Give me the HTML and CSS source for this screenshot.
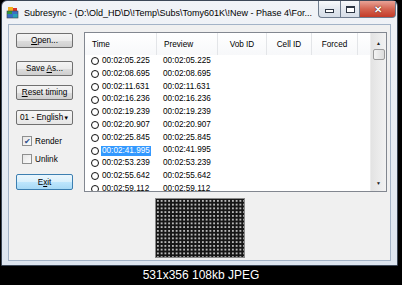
FILE: index.html
```html
<!DOCTYPE html>
<html lang="en">
<head>
  <meta charset="UTF-8" />
  <title>Subresync</title>
  <link rel="stylesheet" href="styles.css">
</head>
<body>

  <div class="window">
    <div class="titlebar">
      <svg class="title-icon" width="13" height="13" viewBox="0 0 13 13">
        <rect x="1" y="5" width="11" height="7" fill="#3a6fc4"/>
        <rect x="1" y="5" width="5" height="3" fill="#2f9a3e"/>
        <rect x="7" y="8" width="5" height="4" fill="#2aa0b8"/>
        <rect x="2" y="1" width="5" height="4" fill="#f2b01e"/>
        <rect x="7" y="2" width="4" height="3" fill="#d9322b"/>
        <rect x="1" y="5" width="11" height="7" fill="none" stroke="#444" stroke-width="0.6"/>
      </svg>
      <div class="title">Subresync - (D:\Old_HD\D\!Temp\Subs\Tomy601K\!New - Phase 4\For...</div>
      <div class="caption-buttons">
        <div class="cap-btn cap-min"><span></span></div>
        <div class="cap-btn cap-max"><span></span></div>
        <div class="cap-btn cap-close">&#x2715;</div>
      </div>
    </div>

    <div class="client">
      <div class="main">
        <div class="side">
          <button class="btn btn-open"><u>O</u>pen...</button>
          <button class="btn btn-save">Save <u>A</u>s...</button>
          <button class="btn btn-reset"><u>R</u>eset timing</button>
          <div class="combo">01 - English <span class="combo-arrow">&#9660;</span></div>
          <label class="check check-render"><span class="box checked">&#10004;</span>Render</label>
          <label class="check check-unlink"><span class="box"></span>Unlink</label>
          <button class="btn btn-exit">E<u>x</u>it</button>
        </div>

        <div class="list">
          <div class="list-body">
            <div class="list-head">
              <div class="hcell">Time</div>
              <div class="hcell">Preview</div>
              <div class="hcell center">Vob ID</div>
              <div class="hcell center">Cell ID</div>
              <div class="hcell center">Forced</div>
              <div class="hcell"></div>
            </div>
            <div class="list-rows" id="rows"></div>
          </div>
          <div class="scrollbar">
            <div class="sb-up">&#9650;</div>
            <div class="sb-thumb"></div>
            <div class="sb-track"></div>
            <div class="sb-down">&#9660;</div>
          </div>
        </div>
      </div>

      <div class="preview"></div>
    </div>
  </div>

  <div class="caption">531x356 108kb JPEG</div>

  <script>
    const times = [
      '00:02:05.225', '00:02:08.695', '00:02:11.631', '00:02:16.236',
      '00:02:19.239', '00:02:20.907', '00:02:25.845', '00:02:41.995',
      '00:02:53.239', '00:02:55.642', '00:02:59.112'
    ];
    const selected = 7;
    const rows = document.getElementById('rows');

    times.forEach((t, i) => {
      const row = document.createElement('div');
      row.className = 'row';
      row.innerHTML =
        '<div class="cell"><span class="radio"></span><span class="' +
        (i === selected ? 'sel' : '') + '">' + t + '</span></div>' +
        '<div class="cell">' + t + '</div>';
      rows.appendChild(row);
    });
  </script>

</body>
</html>
```

FILE: styles.css
```css
* {
  box-sizing: border-box;
  margin: 0;
  padding: 0;
}

body {
  width: 402px;
  height: 285px;
  overflow: hidden;
  background: #000;
  font-family: 'Liberation Sans', Arial, sans-serif;
  font-size: 8.2px;
  color: #000;
}

/* Window frame */
.window {
  width: 397px;
  height: 266px;
  margin-left: 1px;
  border: 1px solid #3c4757;
  border-radius: 6px 6px 0 0;
  background: linear-gradient(#f1f3f7, #dde5ef);
  display: flex;
  flex-direction: column;
}

.titlebar {
  height: 23px;
  display: flex;
  align-items: center;
  padding-left: 4px;
  padding-right: 1px;
}

.title-icon {
  margin-right: 5px;
  flex-shrink: 0;
}

.title {
  flex: 1;
  font-size: 9px;
  white-space: nowrap;
  overflow: hidden;
}

.caption-buttons {
  display: flex;
  align-self: flex-start;
  height: 17px;
}

.cap-btn {
  height: 17px;
  border: 1px solid #6f7c8e;
  border-top: none;
  display: flex;
  align-items: center;
  justify-content: center;
  background: linear-gradient(#f7f9fb, #e3e8ef 50%, #d6dde7);
}

.cap-min {
  width: 22px;
  border-radius: 0 0 0 4px;
  border-right: none;
}

.cap-min span {
  width: 9px;
  height: 4px;
  margin-top: 4px;
  border: 1px solid #2d3644;
  background: #fff;
}

.cap-max {
  width: 20px;
}

.cap-max span {
  width: 9px;
  height: 7px;
  border: 1px solid #2d3644;
  border-top-width: 2px;
  background: #fff;
}

.cap-close {
  width: 36px;
  border-left: none;
  border-radius: 0 0 4px 0;
  background: linear-gradient(#e8a397, #d46552 50%, #c43b28);
  color: #fff;
  font-size: 10px;
  font-weight: bold;
  text-shadow: 0 0 1px #5a1a10, 0 0 1px #5a1a10;
}

/* Client area */
.client {
  flex: 1;
  margin: 0 6px 4px;
  border: 1px solid #a3b3c7;
  background: #f0f0f0;
  padding-top: 7px;
  display: flex;
  flex-direction: column;
}

.main {
  display: flex;
  gap: 11px;
  padding-left: 7px;
}

.side {
  width: 57px;
  display: flex;
  flex-direction: column;
}

.btn {
  height: 15px;
  border: 1px solid #707070;
  border-radius: 2px;
  background: linear-gradient(#f4f4f4, #ebebeb 50%, #dddddd 51%, #cfcfcf);
  font-family: inherit;
  font-size: 8.2px;
  color: #000;
  text-align: center;
}

.btn-open { margin-top: 1px; }
.btn-save { margin-top: 13px; }
.btn-reset { margin-top: 9px; }

.btn-exit {
  margin-top: 10px;
  height: 16px;
  border-color: #3c7fb1;
  background: linear-gradient(#eaf6fd, #d9f0fc 50%, #bee6fd 51%, #a7d9f5);
}

.combo {
  margin-top: 10px;
  height: 15px;
  border: 1px solid #707070;
  border-radius: 2px;
  background: linear-gradient(#f6f6f6, #e6e6e6);
  display: flex;
  align-items: center;
  padding-left: 3px;
  white-space: nowrap;
}

.combo-arrow {
  margin-left: auto;
  margin-right: 4px;
  font-size: 6px;
}

.check {
  display: flex;
  align-items: center;
  gap: 3px;
  height: 10px;
  padding-left: 6px;
}

.check-render { margin-top: 11px; }
.check-unlink { margin-top: 8px; }

.box {
  width: 10px;
  height: 10px;
  border: 1px solid #8e8f8f;
  background: linear-gradient(135deg, #e6e6e6, #fbfbfb);
  display: flex;
  align-items: center;
  justify-content: center;
  font-size: 8px;
  color: #2b4e8c;
}

/* List view */
.list {
  width: 303px;
  height: 160px;
  border: 1px solid #828790;
  background: #fff;
  display: flex;
  overflow: hidden;
}

.list-body {
  flex: 1;
  overflow: hidden;
}

.list-head,
.row {
  display: grid;
  grid-template-columns: 72px 61px 49px 45px 46px 12px;
}

.list-head {
  height: 22px;
  background: linear-gradient(#fff, #f7f8fa);
}

.hcell {
  border-right: 1px solid #e3e5e8;
  padding-left: 7px;
  display: flex;
  align-items: center;
  white-space: nowrap;
}

.hcell:last-child {
  border-right: none;
}

.hcell.center {
  justify-content: center;
  padding-left: 0;
}

.row {
  height: 12.75px;
  line-height: 12.75px;
}

.cell {
  display: flex;
  align-items: center;
  padding-left: 6px;
  white-space: nowrap;
}

.radio {
  width: 8px;
  height: 8px;
  border: 1px solid #111;
  border-radius: 50%;
  margin-right: 3px;
  flex-shrink: 0;
}

.sel {
  background: #3399ff;
  color: #fff;
  padding: 0 1px;
  margin-left: -1px;
  line-height: 10px;
}

.scrollbar {
  width: 16px;
  background: linear-gradient(90deg, #e3e3e3, #f2f2f2);
  border-left: 1px solid #ececec;
  display: flex;
  flex-direction: column;
  align-items: center;
}

.sb-up,
.sb-down {
  height: 16px;
  font-size: 5px;
  display: flex;
  align-items: center;
  justify-content: center;
  color: #222;
}

.sb-up { padding-top: 4px; }

.sb-thumb {
  width: 12px;
  height: 11px;
  border: 1px solid #9a9a9a;
  border-radius: 2px;
  background: linear-gradient(90deg, #f4f4f4, #dcdcdc);
}

.sb-track {
  flex: 1;
}

/* Preview */
.preview {
  align-self: center;
  width: 90px;
  height: 60px;
  margin-top: 6px;
  border: 1px solid #8a8a8a;
  background:
    radial-gradient(circle, #cfcfcf 0 0.6px, transparent 1.1px) 0 0 / 3.75px 3.75px,
    #161616;
}

/* Forum caption */
.caption {
  height: 19px;
  line-height: 19px;
  text-align: center;
  color: #fff;
  font-size: 12px;
}
```
